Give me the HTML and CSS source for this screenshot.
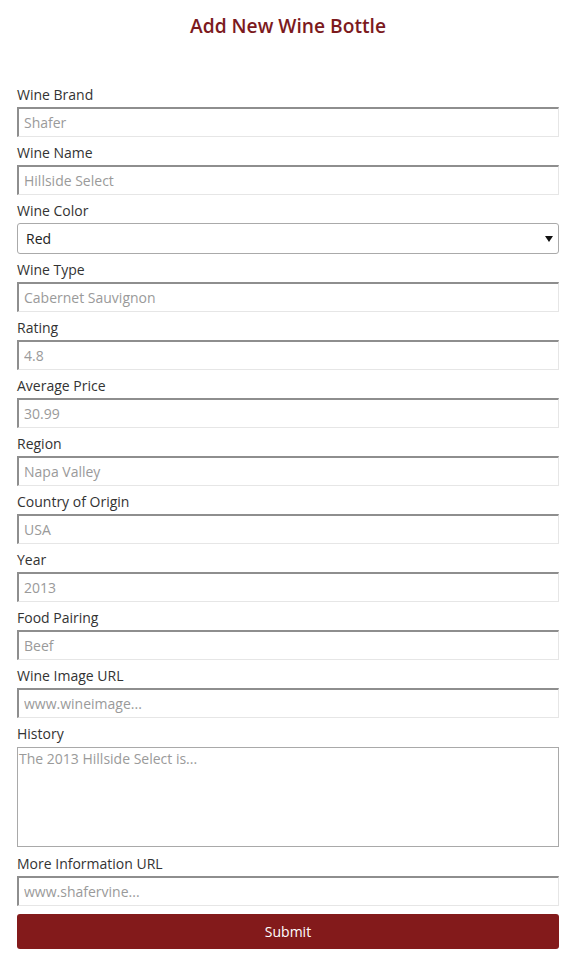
FILE: index.html
```html
<!DOCTYPE html>
<html>
<head>
<meta charset="utf-8">
<link rel="stylesheet" href="styles.css">
</head>
<body>
<div class="page">
  <h1 class="title">Add New Wine Bottle</h1>
  <form class="form">
    <label class="lbl">Wine Brand</label>
    <input class="field" placeholder="Shafer">
    <label class="lbl">Wine Name</label>
    <input class="field" placeholder="Hillside Select">
    <label class="lbl">Wine Color</label>
    <div class="select-wrap">
      <select class="select"><option>Red</option></select>
      <svg class="arrow" width="8" height="6" viewBox="0 0 8 6"><path d="M0 0H8L4 6Z" fill="#111"/></svg>
    </div>
    <label class="lbl">Wine Type</label>
    <input class="field" placeholder="Cabernet Sauvignon">
    <label class="lbl">Rating</label>
    <input class="field" placeholder="4.8">
    <label class="lbl">Average Price</label>
    <input class="field" placeholder="30.99">
    <label class="lbl">Region</label>
    <input class="field" placeholder="Napa Valley">
    <label class="lbl">Country of Origin</label>
    <input class="field" placeholder="USA">
    <label class="lbl">Year</label>
    <input class="field" placeholder="2013">
    <label class="lbl">Food Pairing</label>
    <input class="field" placeholder="Beef">
    <label class="lbl">Wine Image URL</label>
    <input class="field" placeholder="www.wineimage...">
    <label class="lbl">History</label>
    <textarea class="area" placeholder="The 2013 Hillside Select is..."></textarea>
    <label class="lbl">More Information URL</label>
    <input class="field" placeholder="www.shafervine...">
    <button type="button" class="submit">Submit</button>
  </form>
</div>
</body>
</html>
```

FILE: styles.css
```css
* { box-sizing: border-box; }
html, body { margin: 0; padding: 0; background: #fff; }
body { font-family: "Open Sans", "Liberation Sans", sans-serif; color: #333; }
.page { width: 578px; padding: 0 19px 0 17px; }
.title {
  margin: 12px 0 0;
  text-align: center;
  font-size: 19.2px;
  line-height: 28px;
  font-weight: 600;
  color: #7c1a1d;
}
.form { display: flex; flex-direction: column; margin-top: 45px; }
.lbl {
  display: block;
  font-size: 14px;
  line-height: 20px;
  margin-bottom: 2px;
  color: #333;
}
.field {
  display: block;
  width: 542px;
  height: 30px;
  margin: 0 0 6px;
  padding: 0 5px;
  font-family: inherit;
  font-size: 14px;
  color: #333;
  background: #fff;
  border-style: solid;
  border-width: 2px 1px 1px 2px;
  border-color: #8e8e8e #e6e6e6 #e6e6e6 #8e8e8e;
}
.field::placeholder, .area::placeholder { color: #9a9a9a; }
.select-wrap { position: relative; width: 542px; height: 31px; margin-bottom: 6px; }
.select {
  -webkit-appearance: none;
  appearance: none;
  width: 100%;
  height: 31px;
  padding: 0 8px;
  font-family: inherit;
  font-size: 14px;
  color: #222;
  background: #fff;
  border: 1px solid #aaa;
  border-radius: 3px;
}
.arrow { position: absolute; right: 6px; top: 13px; }
.area {
  display: block;
  width: 542px;
  height: 100px;
  margin: 1px 0 7px;
  padding: 1px 1px;
  resize: none;
  font-family: inherit;
  font-size: 14px;
  line-height: 20px;
  color: #333;
  border: 1px solid #a9a9a9;
}
.submit {
  display: block;
  width: 542px;
  height: 35px;
  margin-top: 2px;
  border: none;
  border-radius: 3px;
  background: #831a1b;
  color: #fff;
  font-family: inherit;
  font-size: 14px;
}
```
